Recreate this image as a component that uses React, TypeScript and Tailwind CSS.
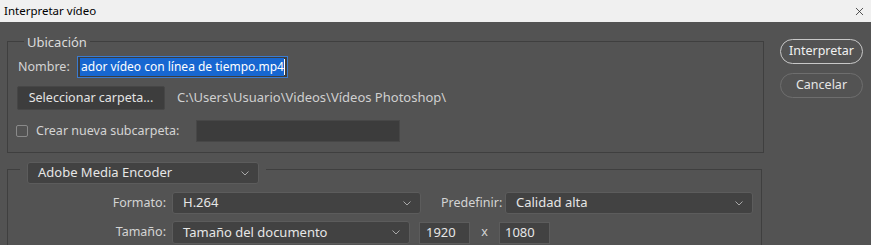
import { X } from "lucide-react";

const font = { fontFamily: '"Noto Sans", "Open Sans", sans-serif' };

function Chevron() {
  return (
    <svg width="8" height="5" viewBox="0 0 8 5" className="shrink-0">
      <path d="M0.5 0.5 L4 4 L7.5 0.5" fill="none" stroke="#a8a8a8" strokeWidth="1" />
    </svg>
  );
}

function Select({ value, className }: { value: string; className: string }) {
  return (
    <div
      className={`flex items-center justify-between rounded-[3px] border border-[#5c5c5c] bg-[#424242] pl-[10px] pr-[9px] text-[13px] text-[#e6e6e6] ${className}`}
    >
      <span>{value}</span>
      <Chevron />
    </div>
  );
}

export default function App() {
  return (
    <div className="h-[245px] w-[871px] overflow-hidden bg-[#535353] text-[12.5px] text-[#d4d4d4]" style={font}>
      {/* Title bar */}
      <div className="flex h-[22px] items-center justify-between bg-[#f0f0f0] pl-[4px] pr-[5px] text-[11.5px] text-black">
        <span>Interpretar vídeo</span>
        <X className="h-[13px] w-[13px] text-[#222]" strokeWidth={1.4} />
      </div>

      <div className="flex pl-[7px]">
        <div className="flex w-[757px] flex-col">
          {/* Ubicación */}
          <div className="mt-[19px] flex h-[112px] flex-col border border-[#3f3f3f] pl-[9px]">
            <div className="-mt-[8px] ml-[7px] h-[16px] w-fit bg-[#535353] px-[3px] text-[13px] leading-[16px] text-[#dcdcdc]">
              Ubicación
            </div>
            <div className="mt-[6px] flex h-[22px] items-center">
              <span className="w-[60px] pl-[1px]">Nombre:</span>
              <div className="flex h-[22px] w-[211px] items-center border border-[#3a7bd0] bg-[#3d3d3d] px-[2px] text-[12px]">
                <span className="flex h-[18px] w-[204px] items-center justify-end overflow-hidden whitespace-nowrap bg-[#1767d1] text-white">
                  ador vídeo con línea de tiempo.mp4
                </span>
                <span className="h-[16px] w-[1px] bg-white" />
              </div>
            </div>
            <div className="mt-[8px] flex h-[24px] items-center">
              <div className="flex h-[24px] w-[148px] items-center justify-center rounded-[2px] border border-[#464646] bg-[#3d3d3d] text-[#e4e4e4]">
                Seleccionar carpeta...
              </div>
              <span className="ml-[12px] text-[13px] text-[#d0d0d0]">C:\Users\Usuario\Videos\Vídeos Photoshop\</span>
            </div>
            <div className="mt-[10px] flex h-[22px] items-center">
              <span className="-ml-[1px] h-[12px] w-[12px] rounded-[2px] border border-[#8a8a8a]" />
              <span className="ml-[8px] w-[160px]">Crear nueva subcarpeta:</span>
              <div className="h-[22px] w-[204px] border border-[#474747] bg-[#3c3c3c]" />
            </div>
          </div>

          {/* Adobe Media Encoder */}
          <div className="mt-[16px] flex h-[80px] w-[755px] flex-col border border-[#3f3f3f]">
            <div className="-mt-[8px] ml-[12px] w-fit bg-[#535353] px-[7px]">
              <Select value="Adobe Media Encoder" className="h-[22px] w-[232px]" />
            </div>
            <div className="mt-[8px] flex h-[22px] items-center">
              <span className="w-[164px] pr-[6px] text-right">Formato:</span>
              <Select value="H.264" className="h-[22px] w-[249px]" />
              <span className="ml-[20px] w-[64px]">Predefinir:</span>
              <Select value="Calidad alta" className="h-[22px] w-[248px]" />
            </div>
            <div className="mt-[7px] flex h-[23px] items-center">
              <span className="w-[164px] pr-[6px] text-right">Tamaño:</span>
              <Select value="Tamaño del documento" className="h-[23px] w-[238px]" />
              <div className="ml-[9px] flex h-[22px] w-[51px] items-center border border-[#5c5c5c] bg-[#424242] pl-[6px] text-[13px] text-[#e6e6e6]">
                1920
              </div>
              <span className="w-[29px] text-center">x</span>
              <div className="flex h-[22px] w-[51px] items-center border border-[#5c5c5c] bg-[#424242] pl-[5px] text-[13px] text-[#e6e6e6]">
                1080
              </div>
            </div>
          </div>
        </div>

        {/* Buttons */}
        <div className="ml-[16px] mt-[17px] flex flex-col gap-[9px]">
          <div className="flex h-[25px] w-[83px] items-center justify-center rounded-full border-[1.5px] border-[#c8c8c8] text-[#f0f0f0]">
            Interpretar
          </div>
          <div className="flex h-[25px] w-[83px] items-center justify-center rounded-full border-[1.5px] border-[#6e6e6e] text-[#e6e6e6]">
            Cancelar
          </div>
        </div>
      </div>
    </div>
  );
}
